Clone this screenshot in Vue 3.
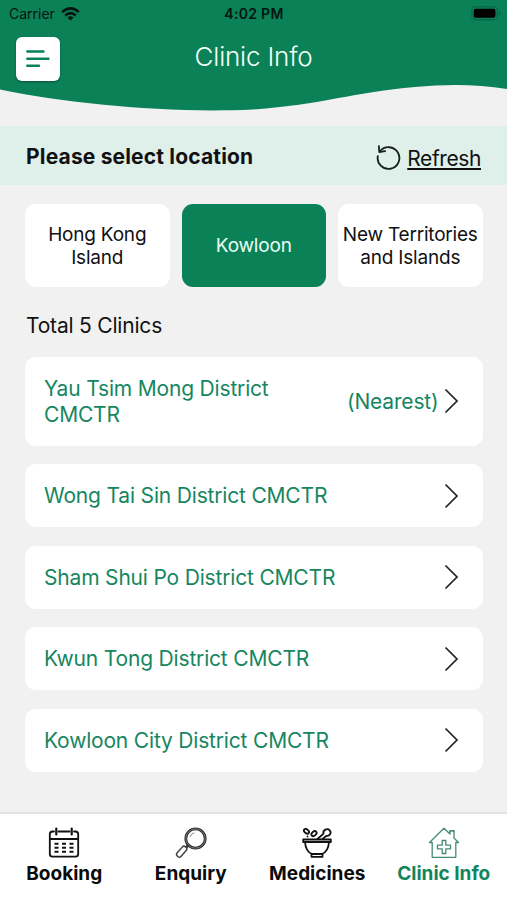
<template>
  <div class="screen">
    <header class="header">
      <!-- Green backdrop with a wavy lower edge -->
      <svg class="wave" viewBox="0 0 507 112" preserveAspectRatio="none">
        <path
          d="M0 0H507V89C477 84 446 84 415 87C355 92 320 105 253 109.500C170 113.500 70 104 0 89.500Z"
          fill="#0b8158"
        />
      </svg>

      <div class="status-bar">
        <div class="carrier">
          <span>Carrier</span>
          <svg width="19" height="14" viewBox="0 0 19 14">
            <g fill="none" stroke="#04150f" stroke-width="2.500">
              <path d="M1.200 5.200Q9.500 -2.400 17.800 5.200" />
              <path d="M4.200 8.500Q9.500 3.800 14.800 8.500" />
            </g>
            <path d="M6.500 10.500Q9.500 8 12.500 10.500L9.500 13.500Z" fill="#04150f" />
          </svg>
        </div>
        <span class="time">4:02 PM</span>
        <svg class="battery" width="31" height="15" viewBox="0 0 31 15">
          <rect x=".8" y=".8" width="25.500" height="12.900" rx="4" fill="#0b8158" stroke="#086a49" stroke-width="1.400" />
          <rect x="2.700" y="2.700" width="21.700" height="9.100" rx="2" fill="#000" />
          <path d="M28 5V10Q30 9 30 7.500T28 5Z" fill="#086a49" />
        </svg>
      </div>

      <div class="title-row">
        <button class="menu" aria-label="Menu">
          <svg width="24" height="20" viewBox="0 0 24 20">
            <path
              d="M1.300 2.500H17.500M1.300 9.700H22.500M1.300 16.800H13"
              fill="none"
              stroke="#0b8158"
              stroke-width="2.400"
              stroke-linecap="round"
            />
          </svg>
        </button>
        <h1>Clinic Info</h1>
      </div>
    </header>

    <section class="location-bar">
      <h2>Please select location</h2>
      <button class="refresh">
        <svg width="25" height="25" viewBox="0 0 26 26">
          <g fill="none" stroke="#17211e" stroke-width="1.900" stroke-linecap="round" stroke-linejoin="round">
            <path d="M1.900 11.500A11.300 11.300 0 1 0 4.200 6.500" />
            <path d="M3 1.100L3.400 7.300L9.500 6.300" />
          </g>
        </svg>
        <span>Refresh</span>
      </button>
    </section>

    <main>
      <div class="regions">
        <button
          v-for="region in regions"
          :key="region.id"
          class="region"
          :class="{ active: region.id === selected }"
          @click="selected = region.id"
        >
          <span v-for="line in region.lines" :key="line">{{ line }}</span>
        </button>
      </div>

      <p class="total">Total {{ clinics.length }} Clinics</p>

      <ul class="clinics">
        <li v-for="clinic in clinics" :key="clinic.name" class="clinic" :class="{ tall: clinic.nearest }">
          <span class="name">{{ clinic.name }}</span>
          <span v-if="clinic.nearest" class="nearest">(Nearest)</span>
          <svg class="chevron" width="15" height="26" viewBox="0 0 15 26">
            <path d="M1.500 1.500L13 13L1.500 24.500" fill="none" stroke="#222" stroke-width="1.700" />
          </svg>
        </li>
      </ul>
    </main>

    <nav class="tabs">
      <a v-for="tab in tabs" :key="tab.id" class="tab" :class="{ current: tab.id === 'info' }">
        <svg v-if="tab.id === 'booking'" width="32" height="32" viewBox="0 0 32 32">
          <g fill="none" stroke="#111" stroke-width="1.800" stroke-linecap="round">
            <path d="M6 4.500H4.500Q1.800 4.500 1.800 7.200V27Q1.800 29.700 4.500 29.700H27.500Q30.200 29.700 30.200 27V7.200Q30.200 4.500 27.500 4.500H26M10.500 4.500H21.500M1.800 12H30.200" />
            <path d="M8.300 1.500V7.500M23.700 1.500V7.500" stroke-width="2.200" />
          </g>
          <path
            d="M6.500 16.700H10.500M14 16.700H18M21.500 16.700H25.500M6.500 20.700H10.500M14 20.700H18M21.500 20.700H25.500M6.500 24.700H10.500M14 24.700H18M21.500 24.700H25.500"
            stroke="#111"
            stroke-width="2"
          />
        </svg>

        <svg v-else-if="tab.id === 'enquiry'" width="32" height="32" viewBox="0 0 32 32">
          <circle cx="20.500" cy="11.500" r="9.700" fill="none" stroke="#2e2e2e" stroke-width="2.800" />
          <circle cx="20.500" cy="11.500" r="9.700" fill="none" stroke="#8a8a8a" stroke-width=".8" />
          <path d="M14.800 10Q16 6.500 19.300 5.800" fill="none" stroke="#777" stroke-width=".9" />
          <path d="M13.300 18.300L10.500 21" stroke="#333" stroke-width="2.600" />
          <rect
            x="-2.600"
            y="-6.200"
            width="5.200"
            height="12.400"
            rx="2.400"
            transform="translate(6.700 24.700) rotate(41)"
            fill="#fff"
            stroke="#444"
            stroke-width="1.500"
          />
        </svg>

        <svg v-else-if="tab.id === 'medicines'" width="32" height="32" viewBox="0 0 32 32">
          <g fill="none" stroke="#111" stroke-width="1.800" stroke-linecap="round" stroke-linejoin="round">
            <path d="M2.200 12.500H29.800V15H2.200ZM4 15C4.500 21.500 7 25.500 11 27H21C25 25.500 27.500 21.500 28 15" />
            <path d="M10.500 27V29.800H21.500V27" />
            <path d="M16.500 12L22.500 6.600C21.500 3 26.500 .8 28.700 3.300C31 6 28.500 9.500 25.500 8.800L21.500 12" />
            <ellipse cx="5.500" cy="4.300" rx="2.900" ry="1.900" transform="rotate(40 5.500 4.300)" />
            <ellipse cx="13" cy="6.600" rx="2.900" ry="2" transform="rotate(-42 13 6.600)" />
            <path d="M6.500 9.500V9.600" />
          </g>
        </svg>

        <svg v-else width="32" height="32" viewBox="0 0 32 32">
          <g fill="none" stroke="#448c70" stroke-width="1.300" stroke-linejoin="round">
            <path d="M4.200 15.500V30.300H27.800V15.500H30.500L26 11V3.800H22V7L16 1.300L1.500 15.500Z" />
            <path d="M21.300 3.800H26.700" />
            <path d="M14.200 13.500H17.800V18.200H22.500V21.800H17.800V26.500H14.200V21.800H9.500V18.200H14.200Z" />
          </g>
        </svg>
        <span>{{ tab.label }}</span>
      </a>
    </nav>
  </div>
</template>

<script setup>
import { ref } from 'vue'

const selected = ref('kowloon')

const regions = [
  { id: 'island', lines: ['Hong Kong', 'Island'] },
  { id: 'kowloon', lines: ['Kowloon'] },
  { id: 'nt', lines: ['New Territories', 'and Islands'] },
]

const clinics = [
  { name: 'Yau Tsim Mong District CMCTR', nearest: true },
  { name: 'Wong Tai Sin District CMCTR' },
  { name: 'Sham Shui Po District CMCTR' },
  { name: 'Kwun Tong District CMCTR' },
  { name: 'Kowloon City District CMCTR' },
]

const tabs = [
  { id: 'booking', label: 'Booking' },
  { id: 'enquiry', label: 'Enquiry' },
  { id: 'medicines', label: 'Medicines' },
  { id: 'info', label: 'Clinic Info' },
]
</script>

<style>
body {
  background: #f1f1f1;
}
</style>

<style scoped>
.screen {
  display: flex;
  flex-direction: column;
  height: 900px;
  overflow: hidden;
  background: #f1f1f1;
  color: #111;
  font-family: Inter, "Liberation Sans", sans-serif;
}

.screen * {
  box-sizing: border-box;
}

button {
  border: 0;
  padding: 0;
  background: none;
  color: inherit;
  font: inherit;
  letter-spacing: inherit;
}

h1,
h2,
p,
ul {
  margin: 0;
  padding: 0;
  list-style: none;
}

.header {
  position: relative;
  flex: none;
  height: 126px;
}

.wave {
  position: absolute;
  top: 0;
  left: 0;
  width: 507px;
  height: 112px;
}

.status-bar {
  position: relative;
  display: grid;
  grid-template-columns: 1fr auto 1fr;
  align-items: center;
  height: 27px;
  padding: 0 8px 0 9px;
  color: #04150f;
  font-size: 14px;
}

.carrier {
  display: flex;
  align-items: center;
  gap: 6px;
}

.time {
  font-weight: 600;
  letter-spacing: 0.3px;
}

.battery {
  justify-self: end;
  margin-right: -3px;
}

.title-row {
  position: relative;
  display: grid;
  grid-template-columns: 44px 1fr 44px;
  padding: 10px 16px 0;
}

.menu {
  display: grid;
  place-items: center;
  width: 44px;
  height: 43.5px;
  border-radius: 6px;
  background: #fff;
  box-shadow: 0 1px 2px rgba(0, 0, 0, 0.4);
}

h1 {
  padding-top: 5px;
  color: #f4fffa;
  font-size: 26px;
  font-weight: 350;
  letter-spacing: -0.2px;
  line-height: 30px;
  text-align: center;
}

.location-bar {
  display: flex;
  flex: none;
  align-items: center;
  justify-content: space-between;
  height: 59px;
  padding: 2px 26px 0;
  background: #dfefea;
}

h2 {
  font-size: 21px;
  font-weight: 700;
  letter-spacing: 0.17px;
}

.refresh {
  display: flex;
  align-items: center;
  gap: 6px;
  padding-top: 3px;
  font-size: 21px;
  letter-spacing: -0.4px;
}

.refresh svg {
  margin-top: -1px;
}

.refresh span {
  text-decoration: underline;
  text-decoration-thickness: 2px;
  text-underline-offset: 2px;
}

main {
  flex: 1;
  padding: 19px 24.5px 0 25px;
}

.regions {
  display: grid;
  grid-template-columns: repeat(3, 1fr);
  gap: 12px;
}

.region {
  display: flex;
  flex-direction: column;
  align-items: center;
  justify-content: center;
  height: 83px;
  border-radius: 11px;
  background: #fff;
  font-size: 19px;
  letter-spacing: -0.2px;
  line-height: 23px;
  white-space: nowrap;
}

.region.active {
  background: #0b8158;
  color: #e6fff5;
}

.total {
  margin-top: 26px;
  padding-left: 1px;
  font-size: 21px;
  letter-spacing: -0.2px;
  line-height: 26px;
}

.clinics {
  display: flex;
  flex-direction: column;
  gap: 18.5px;
  margin-top: 18px;
}

.clinic {
  display: flex;
  align-items: center;
  height: 63px;
  padding: 0 24px 0 19px;
  border-radius: 11px;
  background: #fff;
  color: #16865f;
  font-size: 21px;
  letter-spacing: -0.18px;
  line-height: 26px;
}

.clinic.tall {
  height: 88.5px;
}

.name {
  flex: 1;
  padding-top: 1.5px;
}

.nearest {
  margin-right: 5px;
  padding-top: 1px;
}

.chevron {
  flex: none;
}

.tabs {
  display: grid;
  flex: none;
  grid-template-columns: repeat(4, 1fr);
  height: 88px;
  padding-left: 1px;
  border-top: 2px solid #e3e3e3;
  background: #fff;
}

.tab {
  display: flex;
  flex-direction: column;
  align-items: center;
  padding-top: 13px;
  color: #0b0b0b;
  font-size: 19px;
  font-weight: 700;
  line-height: 24px;
  white-space: nowrap;
}

.tab span {
  margin-top: 3px;
}

.tab.current {
  color: #12855c;
}
</style>
